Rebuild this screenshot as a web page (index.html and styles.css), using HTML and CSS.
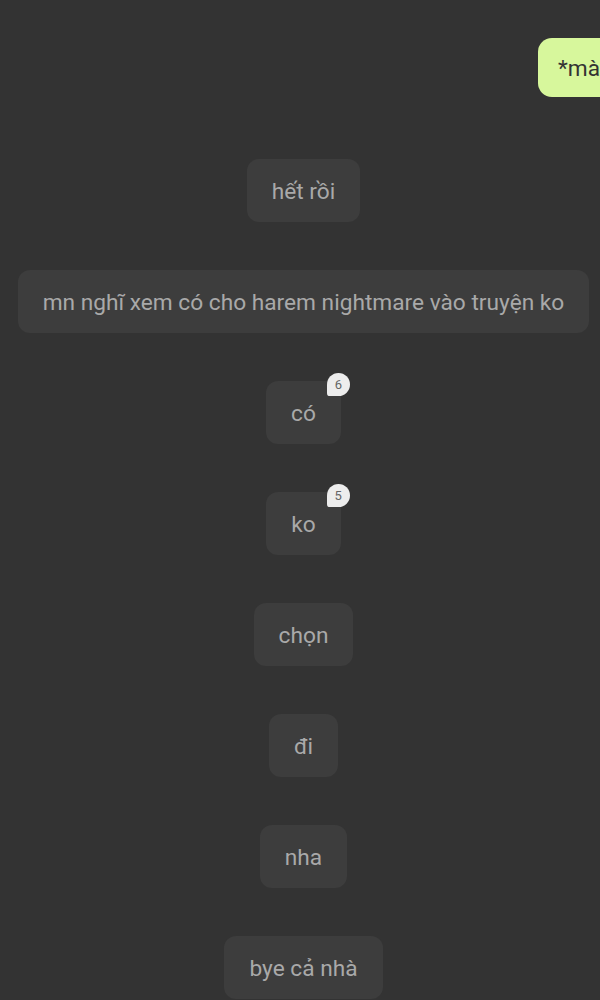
FILE: index.html
```html
<!DOCTYPE html>
<html lang="vi">
<head>
    <meta charset="UTF-8">
    <meta name="viewport" content="width=device-width, initial-scale=1.0">
    <title>Chat</title>
    <link rel="stylesheet" href="styles.css">
</head>
<body>
    <div class="chat">
        <div class="row row-mine">
            <div class="bubble mine">*mà</div>
        </div>
        <div class="row"><div class="bubble">hết rồi</div></div>
        <div class="row"><div class="bubble">mn nghĩ xem có cho harem nightmare vào truyện ko</div></div>
        <div class="row"><div class="bubble">có<span class="badge">6</span></div></div>
        <div class="row"><div class="bubble">ko<span class="badge">5</span></div></div>
        <div class="row"><div class="bubble">chọn</div></div>
        <div class="row"><div class="bubble">đi</div></div>
        <div class="row"><div class="bubble">nha</div></div>
        <div class="row"><div class="bubble">bye cả nhà</div></div>
    </div>
</body>
</html>
```

FILE: styles.css
```css
html, body {
    margin: 0;
    padding: 0;
    background: #333333;
    overflow: hidden;
}
body {
    font-family: Roboto, "Noto Sans", sans-serif;
    width: 600px;
    height: 1000px;
}
.chat {
    display: flex;
    flex-direction: column;
    gap: 48px;
    padding: 38px 0 0 7px;
}
.row { display: flex; justify-content: center; }
.row-mine { justify-content: flex-start; padding-left: 531px; margin-bottom: 14px; }
.bubble {
    position: relative;
    background: #3d3d3d;
    color: #a9a9a9;
    font-size: 22.7px;
    line-height: 66px;
    height: 63px;
    padding: 0 25px;
    border-radius: 12px;
    white-space: nowrap;
}
.mine {
    background: #d7f79c;
    color: #333;
    line-height: 62px;
    height: 59px;
    padding: 0 40px 0 20px;
    border-radius: 14px;
}
.badge {
    position: absolute;
    top: -8px;
    right: -9px;
    width: 23px;
    height: 23px;
    line-height: 23px;
    text-align: center;
    font-size: 13px;
    color: #666;
    background: #ededed;
    border-radius: 12px 12px 12px 3px;
}
```
